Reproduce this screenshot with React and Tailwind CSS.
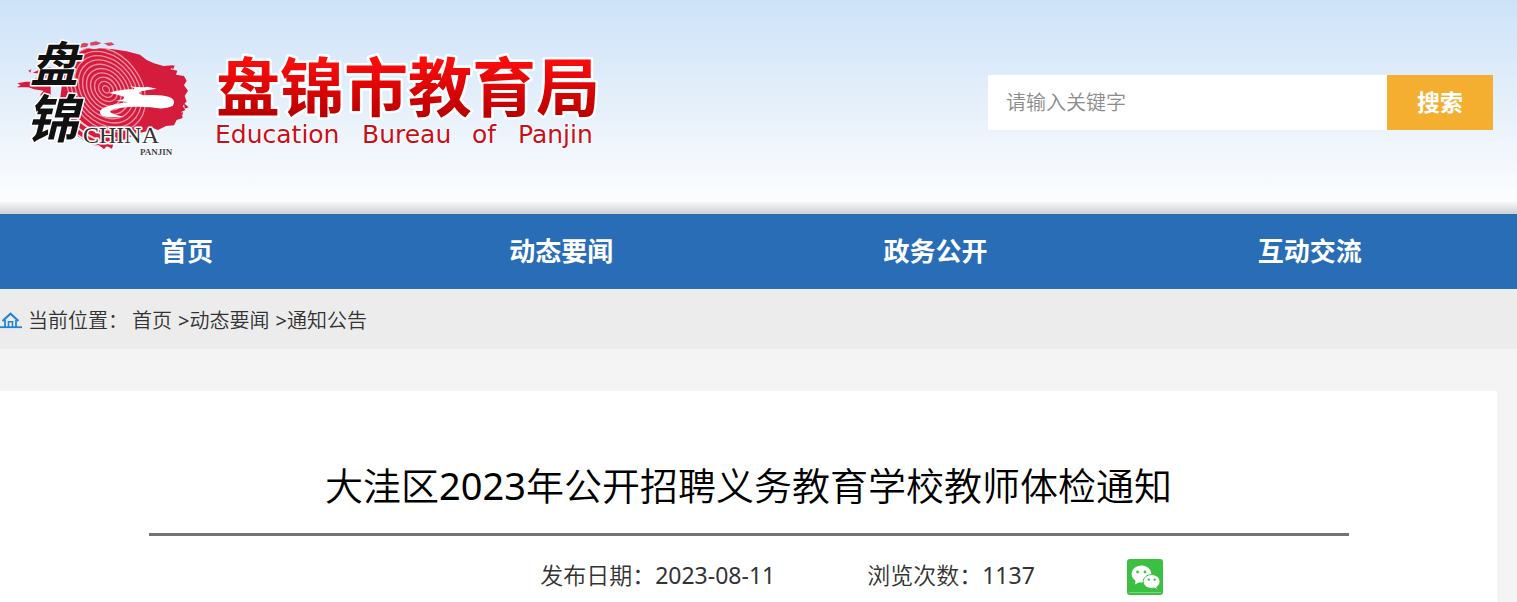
import { useState } from "react";

const menu = [
    { name: "首页", href: "#home" },
    { name: "动态要闻", href: "#news" },
    { name: "政务公开", href: "#open" },
    { name: "互动交流", href: "#contact" },
];

// Rings of the fingerprint inside the emblem
const rings = [12, 26, 40, 54, 68, 82, 96, 110, 124, 138];

const Logo = () => (
    <svg width="620" height="150" viewBox="0 0 620 150" role="img" aria-label="盘锦市教育局" className="shrink-0">
        <defs>
            <linearGradient id="titleRed" x1="0" y1="38" x2="0" y2="97" gradientUnits="userSpaceOnUse">
                <stop offset="0" stopColor="#ff0d0d" />
                <stop offset="1" stopColor="#b80000" />
            </linearGradient>
            <clipPath id="blotch">
                <path d="M206 112 L222 98 L240 94 L262 84 L282 88 L300 85 L340 88 L380 94 L420 104 L440 120 L462 130 L490 138 L520 136 L512 148 L532 152 L528 164 L552 168 L560 182 L552 196 L564 212 L554 228 L560 244 L548 258 L556 270 L544 276 L548 294 L530 300 L522 316 L498 318 L474 330 L452 322 L440 334 L416 340 L390 352 L360 364 L340 372 L318 380 L290 378 L262 368 L238 352 L216 338 L196 300 L180 240 L190 160 Z" />
            </clipPath>
        </defs>
        <g transform="scale(0.33333)">
            <g clipPath="url(#blotch)">
                <rect width="630" height="450" fill="#d61c3c" />
                <g fill="none" stroke="#ee8fa2" strokeWidth="4">
                    {rings.map((r) => (
                        <ellipse key={r} cx="318" cy="208" rx={r * 0.76} ry={r} transform="rotate(-38 318 208)" />
                    ))}
                </g>
                <g fill="none" stroke="#f6d3dc" strokeWidth="6">
                    <path d="M204 322 Q250 366 310 384 M208 298 Q252 350 330 372 M214 276 Q256 334 350 356" />
                </g>
            </g>
            <g fill="#d61c3c">
                <path d="M236 76 l16 -8 14 3 -5 9 -22 3 z M270 68 l18 -4 16 5 -12 6 -20 2 z M312 70 l22 -3 10 7 -18 4 z M84 152 l10 -4 -2 10 z" opacity="0.8" />
                <path d="M52 190 l26 -5 30 1 -4 -10 24 -14 -30 -4 28 -12 26 -4 0 90 -32 -6 10 -14 -28 -4 -16 -6 -36 0 12 -6 z" />
                <path d="M510 140 l14 -4 -4 12 z M552 250 l14 12 -12 4 z M550 276 l-4 12 -6 -8 z M296 374 l16 14 8 -10 16 8 4 -14 z" />
            </g>
            <path d="M326 219 Q368 206 398 208 Q412 206 388 198 Q422 204 442 200 L470 206 Q440 210 424 214 Q408 222 432 226 Q480 222 510 232 Q530 242 518 258 Q494 270 452 262 Q400 258 360 264 Q318 270 336 280 Q350 288 370 290 Q320 296 302 284 Q292 270 318 260 Q352 250 384 246 L346 242 Q376 240 372 230 Q350 222 326 219 Z" fill="#fff" />
        </g>
        <g fontFamily='"Noto Sans CJK SC", sans-serif' fontStyle="italic" fontWeight="700" fill="#111" stroke="#fff" strokeWidth="3" paintOrder="stroke" strokeLinejoin="round">
            <text x="30" y="62" fontSize="48">盘</text>
            <text x="26" y="118" fontSize="52">锦</text>
        </g>
        <g fontFamily='"Liberation Serif", serif' stroke="#fff" paintOrder="stroke" strokeLinejoin="round">
            <text x="83" y="123" fontSize="24" fill="#333" strokeWidth="3">CHINA</text>
            <text x="140" y="135" fontSize="9" fontWeight="700" fill="#444" strokeWidth="1">PANJIN</text>
        </g>
        <text x="216" y="91" fontFamily='"Noto Sans CJK SC", sans-serif' fontWeight="700" fontSize="64" fill="url(#titleRed)" stroke="#fff" strokeWidth="5" strokeLinejoin="round" paintOrder="stroke">盘锦市教育局</text>
        <g fontFamily='"DejaVu Sans", sans-serif' fontSize="25" fill="#c8101c" stroke="#fff" strokeWidth="2" strokeLinejoin="round" paintOrder="stroke">
            <text x="215" y="123">Education</text>
            <text x="362" y="123">Bureau</text>
            <text x="472" y="123">of</text>
            <text x="518" y="123">Panjin</text>
        </g>
    </svg>
);

const HomeIcon = () => (
    <svg width="22" height="18" viewBox="0 0 22 18" fill="none" stroke="#2483d6" aria-hidden="true">
        <path d="M2.5 9 L10.5 1.8 L18.5 9" strokeWidth="2.2" />
        <path d="M5 8 V15 M16 8 V15" strokeWidth="1.8" />
        <path d="M8.5 15 V9.8 H12.5 V15" strokeWidth="1.6" />
        <path d="M0 15.2 H22" strokeWidth="1.8" />
    </svg>
);

const WechatIcon = () => (
    <svg width="36" height="36" viewBox="0 0 36 36" aria-hidden="true">
        <rect width="36" height="36" rx="3" fill="#3cc043" />
        <path d="M2 33.5 H34" stroke="#7bd680" />
        <path d="M14.5 6.5 C9 6.5 4.6 10.3 4.6 15 C4.6 17.8 6.1 20.1 8.5 21.7 L8 25.5 L12 23.2 C17 24.6 24.3 21.3 24.3 15 C24.3 10.3 20 6.5 14.5 6.5 Z" fill="#fff" />
        <path d="M24.6 15.6 C29.3 15.6 33 18.7 33 22.6 C33 24.8 31.8 26.6 29.8 27.9 L30.3 30.6 L27.2 29 C22.2 30.6 16.2 27.6 16.2 22.6 C16.2 18.7 19.9 15.6 24.6 15.6 Z" fill="#fff" stroke="#3cc043" />
        <g fill="#3cc043">
            <circle cx="10.6" cy="13" r="1.4" />
            <circle cx="18" cy="13" r="1.4" />
            <circle cx="21.8" cy="20.6" r="1.2" />
            <circle cx="27.6" cy="20.6" r="1.2" />
        </g>
    </svg>
);

const App = () => {
    const [keyword, setKeyword] = useState("");

    return (
        <div className="flex flex-col min-h-screen bg-[#f4f4f4] font-['Noto_Sans','Noto_Sans_CJK_SC',sans-serif]">
            {/* Header */}
            <header className="bg-linear-to-b from-[#cde2f9] via-[#e6f0fa] to-white">
                <div className="flex items-start justify-between pt-5 pr-6 pb-8">
                    <Logo />
                    <form className="flex w-[505px] mt-[55px] h-[55px]" onSubmit={(e) => e.preventDefault()}>
                        <input
                            type="text"
                            aria-label="请输入关键字"
                            placeholder="请输入关键字"
                            value={keyword}
                            onChange={(e) => setKeyword(e.target.value)}
                            className="flex-1 min-w-0 bg-white px-[18px] text-xl font-[350] text-gray-700 placeholder:text-[#8c8c8c] outline-none"
                        />
                        <button type="submit" className="w-[106px] bg-[#f4af30] text-[23px] font-bold text-white">搜索</button>
                    </form>
                </div>
                <div className="h-3 bg-linear-to-b from-[#f6f7f7] to-[#cfcfcf]"></div>
            </header>

            {/* Menu */}
            <nav className="bg-[#296db7] pr-5">
                <ul className="grid grid-cols-4">
                    {menu.map((item) => (
                        <li key={item.name}>
                            <a href={item.href} className="block text-center text-[26px] leading-[75px] font-bold text-white">{item.name}</a>
                        </li>
                    ))}
                </ul>
            </nav>

            {/* Breadcrumb */}
            <div className="flex items-center h-15 pt-1 bg-[#ececec] text-xl font-[350] text-[#333]">
                <HomeIcon />
                <span className="ml-1.5 mr-1">当前位置：</span>
                <a href="#home">首页</a>
                <span className="ml-1.5 font-normal">&gt;</span>
                <a href="#news">动态要闻</a>
                <span className="ml-1.5 font-normal">&gt;</span>
                <a href="#notice">通知公告</a>
            </div>

            {/* Article */}
            <main className="grow mt-[42px] mr-5 bg-white">
                <article className="mx-auto max-w-[1200px] pt-16">
                    <h1 className="border-b-3 border-[#767374] pb-[18px] text-center text-[38px] leading-[60px] font-[350] text-black">
                        大洼区<span className="font-normal">2023</span>年公开招聘义务教育学校教师体检通知
                    </h1>
                    <div className="flex items-start justify-center pt-[23px] pl-[206px] text-[23px] leading-8 font-[350] text-[#333]">
                        <span>发布日期：<span className="font-normal">2023-08-11</span></span>
                        <span className="ml-[92px]">浏览次数：<span className="font-normal">1137</span></span>
                        <button type="button" aria-label="微信" className="ml-[92px]">
                            <WechatIcon />
                        </button>
                    </div>
                </article>
            </main>
        </div>
    );
};

export default App;
